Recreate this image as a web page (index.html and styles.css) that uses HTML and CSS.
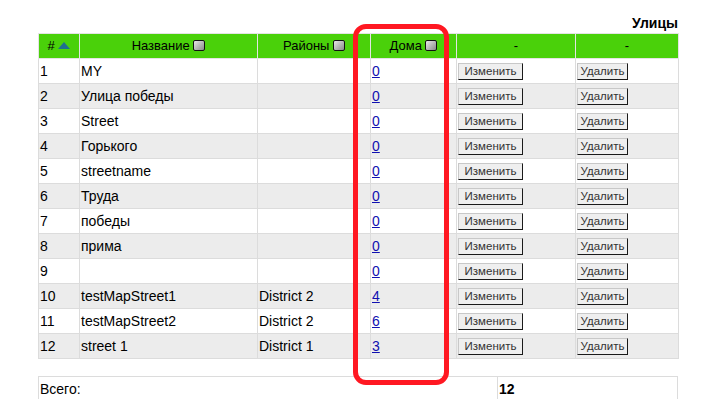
FILE: index.html
```html
<!DOCTYPE html>
<html lang="ru">
<head>
<meta charset="UTF-8" />
<title>Улицы</title>
<link rel="stylesheet" href="styles.css">
</head>
<body>

<div class="page">
  <div class="title">Улицы</div>

  <table class="grid">
    <colgroup>
      <col class="c-num"><col class="c-name"><col class="c-dist"><col class="c-houses"><col class="c-edit"><col class="c-del">
    </colgroup>
    <thead>
      <tr>
        <th># <span class="sort-up"></span></th>
        <th>Название <span class="sort"></span></th>
        <th>Районы <span class="sort"></span></th>
        <th>Дома <span class="sort"></span></th>
        <th>-</th>
        <th>-</th>
      </tr>
    </thead>
    <tbody>
      <tr><td>1</td><td>MY</td><td></td><td><a href="#">0</a></td><td><button class="btn-edit">Изменить</button></td><td><button class="btn-del">Удалить</button></td></tr>
      <tr><td>2</td><td>Улица победы</td><td></td><td><a href="#">0</a></td><td><button class="btn-edit">Изменить</button></td><td><button class="btn-del">Удалить</button></td></tr>
      <tr><td>3</td><td>Street</td><td></td><td><a href="#">0</a></td><td><button class="btn-edit">Изменить</button></td><td><button class="btn-del">Удалить</button></td></tr>
      <tr><td>4</td><td>Горького</td><td></td><td><a href="#">0</a></td><td><button class="btn-edit">Изменить</button></td><td><button class="btn-del">Удалить</button></td></tr>
      <tr><td>5</td><td>streetname</td><td></td><td><a href="#">0</a></td><td><button class="btn-edit">Изменить</button></td><td><button class="btn-del">Удалить</button></td></tr>
      <tr><td>6</td><td>Труда</td><td></td><td><a href="#">0</a></td><td><button class="btn-edit">Изменить</button></td><td><button class="btn-del">Удалить</button></td></tr>
      <tr><td>7</td><td>победы</td><td></td><td><a href="#">0</a></td><td><button class="btn-edit">Изменить</button></td><td><button class="btn-del">Удалить</button></td></tr>
      <tr><td>8</td><td>прима</td><td></td><td><a href="#">0</a></td><td><button class="btn-edit">Изменить</button></td><td><button class="btn-del">Удалить</button></td></tr>
      <tr><td>9</td><td></td><td></td><td><a href="#">0</a></td><td><button class="btn-edit">Изменить</button></td><td><button class="btn-del">Удалить</button></td></tr>
      <tr><td>10</td><td>testMapStreet1</td><td>District 2</td><td><a href="#">4</a></td><td><button class="btn-edit">Изменить</button></td><td><button class="btn-del">Удалить</button></td></tr>
      <tr><td>11</td><td>testMapStreet2</td><td>District 2</td><td><a href="#">6</a></td><td><button class="btn-edit">Изменить</button></td><td><button class="btn-del">Удалить</button></td></tr>
      <tr><td>12</td><td>street 1</td><td>District 1</td><td><a href="#">3</a></td><td><button class="btn-edit">Изменить</button></td><td><button class="btn-del">Удалить</button></td></tr>
    </tbody>
  </table>

  <table class="total">
    <tr><td class="t-label">Всего:</td><td class="t-value">12</td></tr>
  </table>

  <!-- выделение колонки "Дома" -->
  <div class="mark"></div>
</div>

</body>
</html>
```

FILE: styles.css
```css
body {
  margin: 0;
  font-family: "Liberation Sans", Arial, sans-serif;
  font-size: 14px;
  color: #000;
  background: #fff;
}
.page {
  position: relative;
  width: 640px;
  padding: 15px 25px 0 38px;
}
.title {
  text-align: right;
  font-weight: bold;
  font-size: 14px;
  line-height: 16px;
  margin-bottom: 2px;
}
table {
  border-collapse: collapse;
  width: 640px;
  table-layout: fixed;
}
.grid td, .grid th, .total td {
  border: 1px solid #dcdcdc;
  padding: 0 1px;
  height: 24px;
  line-height: 16px;
  white-space: nowrap;
}
.c-num { width: 41px; }
.c-name { width: 178px; }
.c-dist { width: 113px; }
.c-houses { width: 86px; }
.c-edit { width: 119px; }
.c-del { width: 103px; }

.grid th {
  background: #4ad10a;
  font-weight: normal;
  font-size: 13px;
  text-align: center;
  border-color: #e4e4e4;
}
.grid tbody tr:nth-child(even) td {
  background: #ececec;
}
.grid a {
  color: #1010b0;
}

/* значки сортировки */
.sort {
  display: inline-block;
  width: 10px;
  height: 9px;
  border: 1px solid #111;
  border-radius: 2px;
  background: linear-gradient(135deg, #e8e8e8, #8a8a8a);
  vertical-align: -1px;
}
.sort-up {
  display: inline-block;
  width: 0;
  height: 0;
  border-left: 6px solid transparent;
  border-right: 6px solid transparent;
  border-bottom: 7px solid #1f6f8f;
  vertical-align: 1px;
}

button {
  box-sizing: border-box;
  height: 17px;
  font-family: "Liberation Sans", Arial, sans-serif;
  font-size: 11.5px;
  line-height: 13px;
  color: #333;
  background: #efefef;
  padding: 0;
  text-align: center;
  vertical-align: middle;
  border: 1px solid;
  border-color: #c8c8c8 #1a1a1a #1a1a1a #c8c8c8;
  border-radius: 0;
}
.btn-edit { width: 65px; }
.btn-del { width: 51px; }

.total {
  margin-top: 17px;
}
.t-label { width: 456px; }
.t-value { font-weight: bold; }

.mark {
  position: absolute;
  left: 353px;
  top: 24px;
  width: 86px;
  height: 351px;
  border: 5px solid #ff1822;
  border-radius: 13px;
}
```
